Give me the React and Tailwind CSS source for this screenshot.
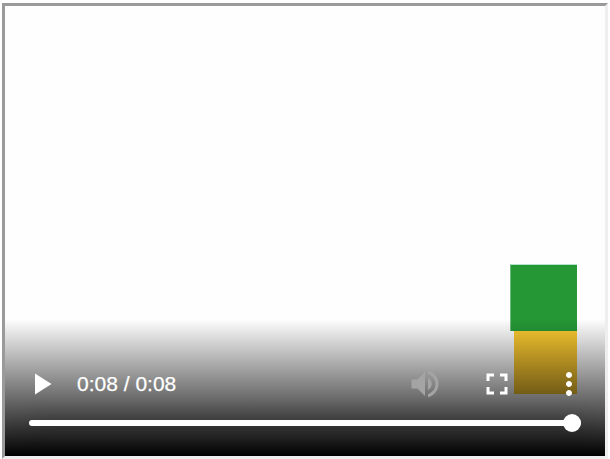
function Icon({ children, className = "" }) {
  return (
    <svg viewBox="0 0 24 24" className={`h-9 w-9 shrink-0 ${className}`} fill="currentColor" aria-hidden="true">
      {children}
    </svg>
  );
}

function ControlButton({ label, children }) {
  return (
    <button aria-label={label} className="flex h-12 w-[72px] shrink-0 items-center justify-center">
      {children}
    </button>
  );
}

function Controls() {
  return (
    <div className="relative flex h-[137px] w-full flex-col bg-linear-to-b from-black/0 to-black pt-[41px] text-white">
      <div className="flex h-12 items-center">
        <ControlButton label="Play">
          <Icon>
            <path d="M8 5v14l11-7z" />
          </Icon>
        </ControlButton>
        <span className="font-['Liberation_Sans',Arial,sans-serif] text-[21px] leading-6 whitespace-nowrap [-webkit-text-stroke:0.25px_white]">0:08 / 0:08</span>
        <div className="ml-auto flex">
          <ControlButton label="Mute">
            <Icon className="text-[#a4a4a4]">
              <path d="M3 9v6h4l5 5V4L7 9H3zm13.5 3c0-1.77-1.02-3.29-2.5-4.03v8.05c1.48-.73 2.5-2.25 2.5-4.02zM14 3.23v2.06c2.89.86 5 3.54 5 6.71s-2.11 5.85-5 6.71v2.06c4.01-.91 7-4.49 7-8.77s-2.99-7.86-7-8.77z" />
            </Icon>
          </ControlButton>
          <ControlButton label="Full screen">
            <Icon>
              <path d="M7 14H5v5h5v-2H7v-3zm-2-4h2V7h3V5H5v5zm12 7h-3v2h5v-5h-2v3zM14 5v2h3v3h2V5h-5z" />
            </Icon>
          </ControlButton>
          <ControlButton label="More options">
            <Icon>
              <path d="M12 8c1.1 0 2-.9 2-2s-.9-2-2-2-2 .9-2 2 .9 2 2 2zm0 2c-1.1 0-2 .9-2 2s.9 2 2 2 2-.9 2-2-.9-2-2-2zm0 6c-1.1 0-2 .9-2 2s.9 2 2 2 2-.9 2-2-.9-2-2-2z" />
            </Icon>
          </ControlButton>
        </div>
      </div>
      <div className="mr-6 ml-6 flex h-[30px] items-center">
        <div className="flex h-1.5 w-full items-center justify-end rounded-full bg-white shadow-[0_0_20px_rgba(0,0,0,0.3)]">
          <div className="h-[18px] w-[18px] shrink-0 rounded-full bg-white" />
        </div>
      </div>
    </div>
  );
}

export default function App() {
  return (
    <div className="h-[459px] w-[610px] overflow-hidden bg-white pt-[3px] pl-0.5">
      <div className="relative flex h-[456px] w-[606px] flex-col justify-end border-[3px] border-t-[#9a9a9a] border-r-[#eeeeee] border-b-[#eeeeee] border-l-[#9a9a9a] bg-[#fefefe]">
        <div className="absolute top-[325px] left-[509px] h-[63px] w-[63px] bg-[#fcca30]" />
        <div className="absolute top-[258px] left-[505px] h-[67px] w-[67px] border-t border-l border-t-[#b5e3cc] border-l-[#6dba80] bg-[#259735]" />
        <Controls />
      </div>
    </div>
  );
}
